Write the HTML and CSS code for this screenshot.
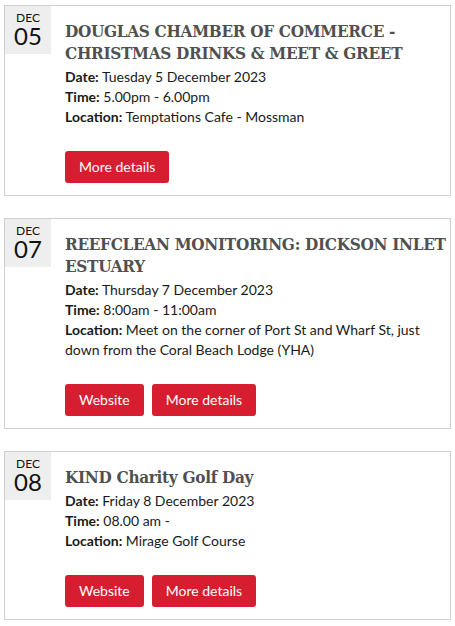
FILE: index.html
```html
<!DOCTYPE html>
<html lang="en">
<head>
<meta charset="utf-8">
<title>Events</title>
<link rel="stylesheet" href="styles.css">
</head>
<body>
<div class="events">
  <article class="event">
    <div class="date"><span class="mon">DEC</span><span class="day">05</span></div>
    <div class="body">
      <h2 class="title">DOUGLAS CHAMBER OF COMMERCE - CHRISTMAS DRINKS &amp; MEET &amp; GREET</h2>
      <div class="meta">
        <p><b>Date:</b> Tuesday 5 December 2023</p>
        <p><b>Time:</b> 5.00pm - 6.00pm</p>
        <p><b>Location:</b> Temptations Cafe - Mossman</p>
      </div>
      <div class="actions"><a class="btn" href="#">More details</a></div>
    </div>
  </article>
  <article class="event">
    <div class="date"><span class="mon">DEC</span><span class="day">07</span></div>
    <div class="body">
      <h2 class="title">REEFCLEAN MONITORING: DICKSON INLET ESTUARY</h2>
      <div class="meta">
        <p><b>Date:</b> Thursday 7 December 2023</p>
        <p><b>Time:</b> 8:00am - 11:00am</p>
        <p><b>Location:</b> Meet on the corner of Port St and Wharf St, just down from the Coral Beach Lodge (YHA)</p>
      </div>
      <div class="actions"><a class="btn" href="#">Website</a><a class="btn" href="#">More details</a></div>
    </div>
  </article>
  <article class="event">
    <div class="date"><span class="mon">DEC</span><span class="day">08</span></div>
    <div class="body">
      <h2 class="title">KIND Charity Golf Day</h2>
      <div class="meta">
        <p><b>Date:</b> Friday 8 December 2023</p>
        <p><b>Time:</b> 08.00 am -</p>
        <p><b>Location:</b> Mirage Golf Course</p>
      </div>
      <div class="actions"><a class="btn" href="#">Website</a><a class="btn" href="#">More details</a></div>
    </div>
  </article>
</div>
</body>
</html>
```
FILE: styles.css
```css
* { box-sizing: border-box; }
html, body { margin: 0; padding: 0; background: #fff; }
body {
  padding: 5px 4px;
  font-family: Lato, "Open Sans", sans-serif;
  color: #1a1a1a;
}
.events {
  display: flex;
  flex-direction: column;
  gap: 22px;
}
.event {
  display: flex;
  align-items: flex-start;
  border: 1px solid #cfcfcf;
  background: #fff;
}
.date {
  flex: 0 0 46px;
  height: 48px;
  background: #eeeeee;
  display: flex;
  flex-direction: column;
  align-items: center;
  padding-top: 5px;
  color: #111;
}
.mon {
  font-size: 12px;
  line-height: 13px;
}
.day {
  font-size: 24px;
  line-height: 24px;
}
.body {
  flex: 1;
  padding: 14px 0 12px 14px;
}
.title {
  margin: 0;
  font-family: "DejaVu Serif Condensed", "DejaVu Serif", serif;
  font-weight: bold;
  font-stretch: condensed;
  font-size: 17px;
  letter-spacing: -0.3px;
  line-height: 22px;
  color: #505050;
}
.meta {
  margin-top: 3px;
  padding-right: 10px;
  font-size: 14px;
  line-height: 20px;
}
.meta p { margin: 0; }
.meta b { font-weight: bold; }
.actions {
  display: flex;
  gap: 8px;
  margin-top: 24px;
}
.btn {
  display: block;
  height: 32px;
  line-height: 32px;
  padding: 0 14px;
  background: #d71e31;
  color: #fff;
  text-decoration: none;
  font-size: 14px;
  border-radius: 3px;
}
```
